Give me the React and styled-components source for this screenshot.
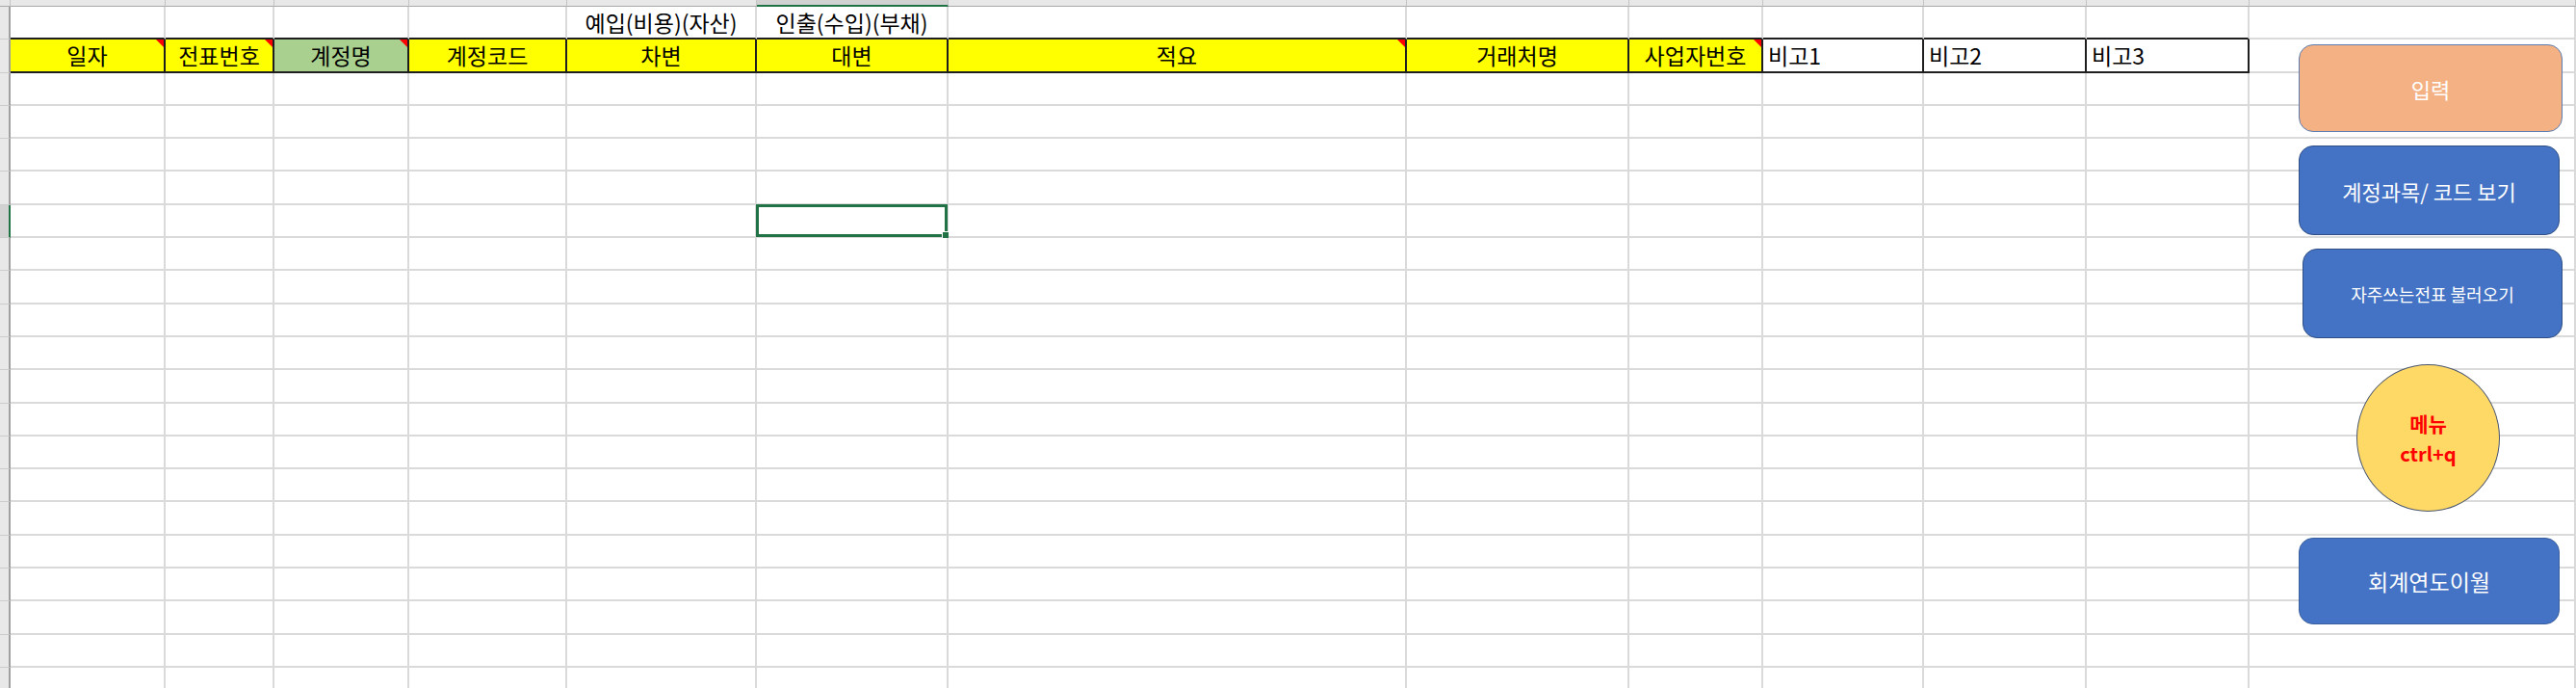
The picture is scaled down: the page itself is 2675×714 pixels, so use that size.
import React from 'react';
import styled, { createGlobalStyle } from 'styled-components';

const GlobalStyle = createGlobalStyle`
  html, body {
    margin: 0;
    padding: 0;
    background: #ffffff;
    overflow: hidden;
  }
  body {
    font-family: "Noto Sans CJK KR", "Noto Sans", sans-serif;
  }
`

const YELLOW = '#ffff00';
const GRID = '#dadada';
const INK = '#1e1e1e';
const ROWS = 21;

const columns = [
    { w: 161, head: '일자', bg: YELLOW, note: true },
    { w: 113, head: '전표번호', bg: YELLOW, note: true },
    { w: 140, head: '계정명', bg: '#a9d08e', note: true },
    { w: 164, head: '계정코드', bg: YELLOW },
    { w: 197, head: '차변', bg: YELLOW, label: '예입(비용)(자산)' },
    { w: 199, head: '대변', bg: YELLOW, label: '인출(수입)(부채)', active: true },
    { w: 476, head: '적요', bg: YELLOW, note: true },
    { w: 231, head: '거래처명', bg: YELLOW },
    { w: 139, head: '사업자번호', bg: YELLOW, note: true },
    { w: 167, head: '비고1', left: true },
    { w: 169, head: '비고2', left: true },
    { w: 169, head: '비고3', left: true },
    { w: 0 },
];

const ACTIVE_ROW = 6;

const Page = styled.div`
    position: relative;
    width: 2675px;
    height: 714px;
    overflow: hidden;
    background: #fff;
`

const Sheet = styled.div`
    display: grid;
    grid-template-columns: 11px ${columns.map(c => (c.w ? c.w + 'px' : '1fr')).join(' ')};
    grid-template-rows: 7px repeat(${ROWS}, 34.3px);
`

const ColHead = styled.div`
    box-sizing: border-box;
    background: ${p => (p.$active ? '#d2d2d2' : '#e8e8e8')};
    border-right: 1px solid #c4c4c4;
    border-bottom: ${p => (p.$active ? '2px solid #217346' : '1px solid #a9a9a9')};
`

const RowHead = styled.div`
    box-sizing: border-box;
    background: ${p => (p.$active ? '#d2d2d2' : '#e8e8e8')};
    border-right: 2px solid ${p => (p.$active ? '#217346' : '#a0a0a0')};
    border-bottom: 1px solid #cdcdcd;
`

const Cell = styled.div`
    position: relative;
    box-sizing: border-box;
    display: flex;
    align-items: center;
    justify-content: ${p => (p.$left ? 'flex-start' : 'center')};
    padding-left: ${p => (p.$left ? '5px' : '0')};
    background: ${p => p.$bg || '#fff'};
    border-right: 2px solid ${p => (p.$edge ? INK : GRID)};
    border-bottom: 2px solid ${p => (p.$under ? INK : GRID)};
    color: #000;
    font-size: 23px;
    line-height: 1;
    white-space: nowrap;
`

const Note = styled.span`
    position: absolute;
    top: 0;
    right: 0;
    width: 0;
    height: 0;
    border-top: 8px solid #ff0000;
    border-left: 8px solid transparent;
`

const Selection = styled.div`
    position: absolute;
    inset: -1px;
    border: 3px solid #217346;
    pointer-events: none;
`

const Handle = styled.span`
    position: absolute;
    right: -7px;
    bottom: -7px;
    width: 8px;
    height: 8px;
    background: #217346;
    border: 1px solid #fff;
`

/* floating shapes drawn over the sheet */
const ShapeLayer = styled.div`
    position: absolute;
    top: 46px;
    left: 2387px;
    width: 275px;
    display: flex;
    flex-direction: column;
    align-items: flex-start;
    gap: 14px;
`

const Button = styled.div`
    box-sizing: border-box;
    width: ${p => p.$w || 271}px;
    height: ${p => p.$h || 93}px;
    margin-left: ${p => p.$indent || 0}px;
    display: flex;
    align-items: center;
    justify-content: center;
    border-radius: 15px;
    background: ${p => p.$bg || '#4472c4'};
    border: 1.5px solid ${p => p.$line || '#2f4f85'};
    color: #ffffff;
    font-size: ${p => p.$size || 22}px;
    white-space: nowrap;
`

const Round = styled.div`
    box-sizing: border-box;
    width: 149px;
    height: 153px;
    margin: 13px 0 13px 60px;
    display: flex;
    flex-direction: column;
    align-items: center;
    justify-content: center;
    border-radius: 50%;
    background: #ffd966;
    border: 1.5px solid #4a5670;
    color: #ff0000;
    font-weight: 700;
    line-height: 1.55;
`

const MenuTitle = styled.span`
    font-size: 21px;
`

const MenuKey = styled.span`
    font-size: 20px;
`

function HeaderStrip() {
    return (
        <>
            <ColHead />
            {columns.map((c, i) => (
                <ColHead key={i} $active={c.active} />
            ))}
        </>
    );
}

function LabelRow() {
    return (
        <>
            <RowHead />
            {columns.map((c, i) => (
                <Cell key={i} $under={!!c.w}>
                    {c.label}
                </Cell>
            ))}
        </>
    );
}

function TitleRow() {
    return (
        <>
            <RowHead />
            {columns.map((c, i) =>
                c.w ? (
                    <Cell key={i} $bg={c.bg} $left={c.left} $edge $under>
                        {c.head}
                        {c.note && <Note />}
                    </Cell>
                ) : (
                    <Cell key={i} />
                )
            )}
        </>
    );
}

function DataRow({ index }) {
    const active = index === ACTIVE_ROW;
    return (
        <>
            <RowHead $active={active} />
            {columns.map((c, i) => (
                <Cell key={i}>
                    {active && c.active && (
                        <Selection>
                            <Handle />
                        </Selection>
                    )}
                </Cell>
            ))}
        </>
    );
}

export default function App() {
    const rows = [];
    for (let r = 2; r < ROWS; r++) rows.push(<DataRow key={r} index={r} />);

    return (
        <Page>
            <GlobalStyle />
            <Sheet>
                <HeaderStrip />
                <LabelRow />
                <TitleRow />
                {rows}
            </Sheet>

            <ShapeLayer>
                <Button $w={274} $h={91} $bg="#f4b183" $line="#5b7db3">입력</Button>
                <Button>계정과목/ 코드 보기</Button>
                <Button $w={270} $indent={4} $size={18}>자주쓰는전표 불러오기</Button>
                <Round>
                    <MenuTitle>메뉴</MenuTitle>
                    <MenuKey>ctrl+q</MenuKey>
                </Round>
                <Button $h={90} $line="#3a5f9e" $size={23}>회계연도이월</Button>
            </ShapeLayer>
        </Page>
    );
}
